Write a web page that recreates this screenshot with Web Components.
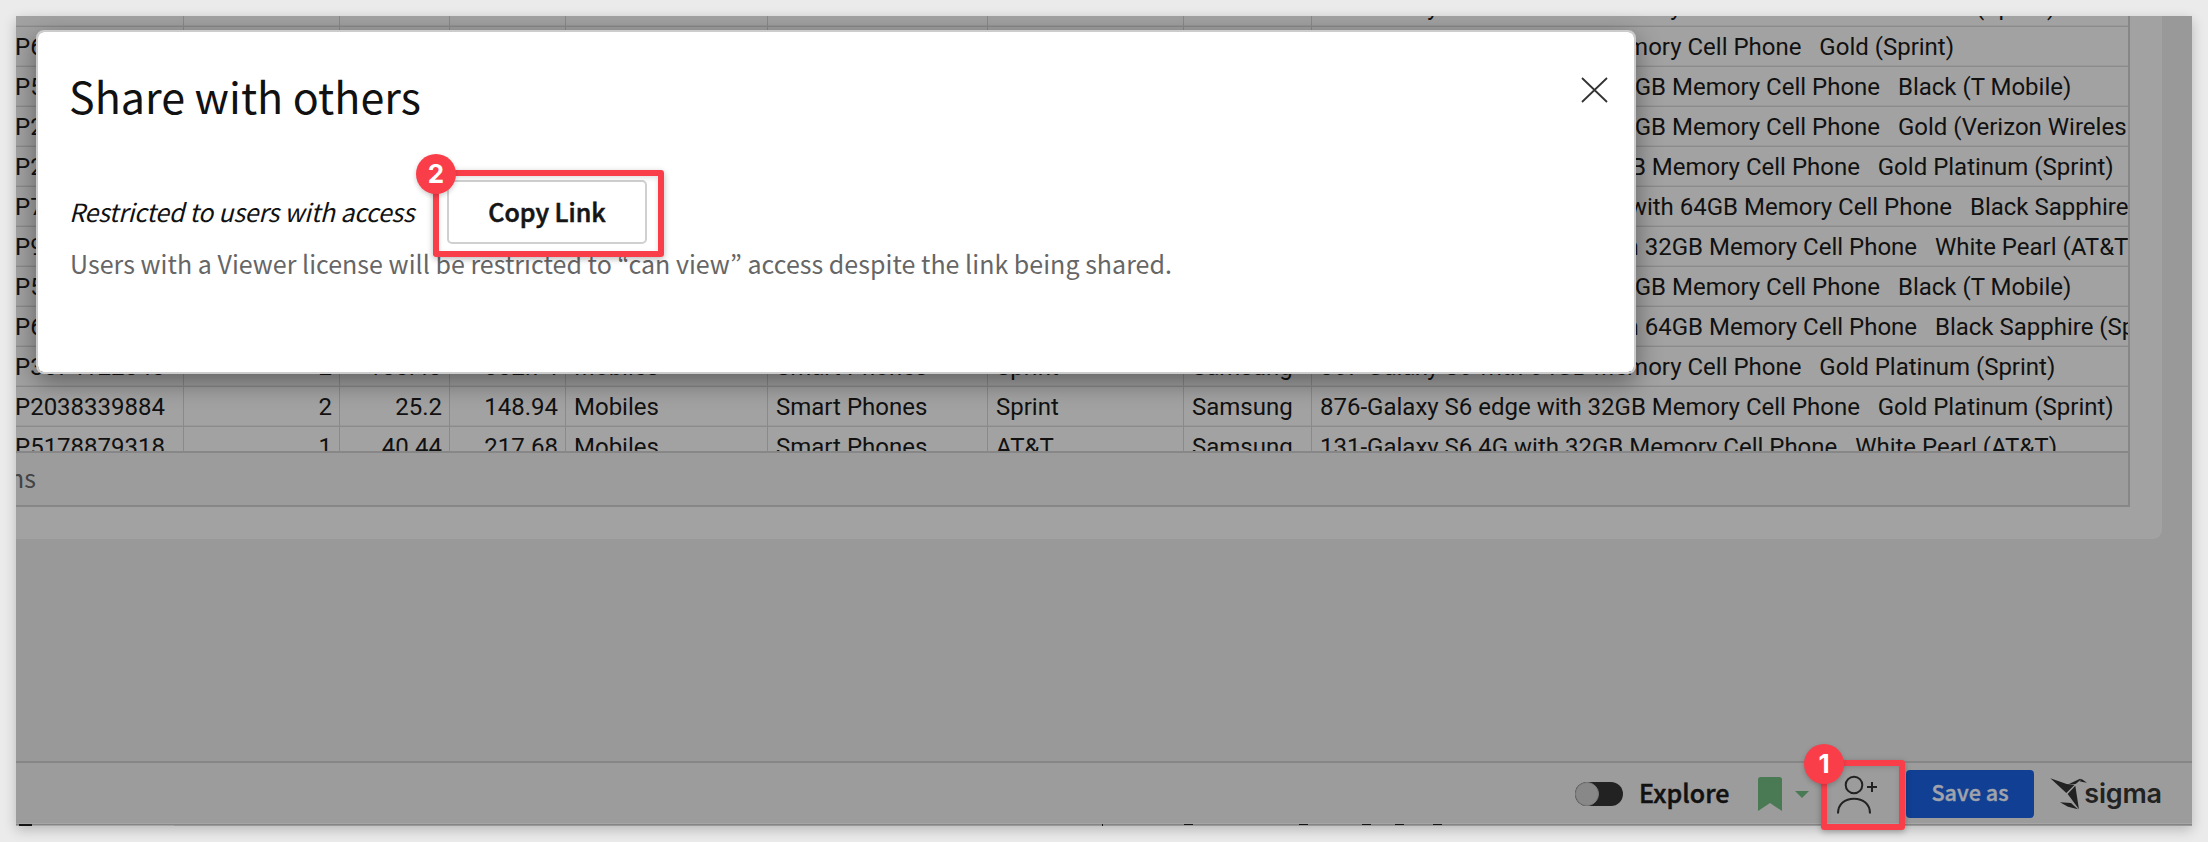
<!DOCTYPE html>
<html lang="en">
<head>
<meta charset="utf-8">
<title>Share with others</title>
<style>
  html, body { margin: 0; height: 100%; background: #ebebeb; }
  body { overflow: hidden; font-family: "Noto Sans CJK KR", "Noto Sans CJK SC", sans-serif; }
</style>
</head>
<body>
<app-screen>
  <data-table></data-table>
  <bottom-bar slot="bar"></bottom-bar>
  <share-dialog slot="dialog"></share-dialog>
</app-screen>
<script>
const define = (name, html, setup) => customElements.define(name, class extends HTMLElement {
  constructor() {
    super();
    this.attachShadow({ mode: 'open' }).innerHTML = html;
    if (setup) setup.call(this, this.shadowRoot);
  }
});

/* numbered red frame around a control */
define('step-marker', `
<style>
  :host { position: absolute; box-sizing: border-box; border: 6px solid #f93e4a; border-radius: 3px;
    box-shadow: 0 2px 6px rgba(0,0,0,.28), inset 0 2px 5px rgba(0,0,0,.12); pointer-events: none; }
  b { position: absolute; left: -23px; top: -22px; width: 40px; height: 40px; border-radius: 50%;
    background: #f93e4a; color: #fff; font: 700 26px/40px Inter, sans-serif; text-align: center;
    box-shadow: 0 2px 5px rgba(0,0,0,.2); }
</style><b><slot></slot></b>`);

define('data-table', `
<style>
  :host { display: block; width: 2112px; overflow: hidden; border-right: 2px solid #878787; color: #111;
    font-family: Roboto, sans-serif; font-size: 24px; }
  .rows { height: 435px; overflow: hidden; }
  .row { display: grid; grid-template-columns: 168px 156px 110px 116px 202px 220px 196px 128px 1fr;
    height: 38px; line-height: 40px; border-bottom: 1px solid #8b8b8b; box-shadow: inset 0 -1px #999; padding-bottom: 1px; white-space: pre; }
  .row:first-child { margin-top: -29px; }
  .row span { box-sizing: border-box; overflow: hidden; border-right: 1px solid #8a8a8a; padding: 0 7px 0 8px; height: 39px; min-width: 0; }
  .row span:first-child { padding: 0; text-indent: -1px; }
  .row .n { text-align: right; }
  .row .d { display: flex; border: 0; padding-right: 0; }
  .d i { font-style: normal; flex: none; display: flex; justify-content: flex-end; }
  .foot { box-sizing: border-box; height: 56px; border: solid #878787; border-width: 2px 0; background: #9c9c9c; display: flex; align-items: center; }
  .foot div { width: 20px; overflow: hidden; display: flex; justify-content: flex-end; color: #444;
    font: 25px/36px "Noto Sans CJK KR", sans-serif; margin-top: -5px; }
</style>
<div class="rows"></div>
<div class="foot"><div>ns</div></div>`, function (root) {
  const M = 'Memory Cell Phone   ';
  const rows = [
    ['', '', '', '', '', '357-Galaxy S6 with 64GB ', 0, 'Gold Platinum (Sprint)'],
    ['P6', '', '', '', '', '214-Galaxy S6 with 32GB ', 0, 'Gold (Sprint)'],
    ['P5', '', '', '', '', '32GB ', 352, 'Black (T Mobile)'],
    ['P2', '', '', '', '', '32GB ', 352, 'Gold (Verizon Wireles'],
    ['P2', '', '', '', '', '876-Galaxy S6 edge with 32GB ', 0, 'Gold Platinum (Sprint)'],
    ['P7', '', '', '', '', 'with 64GB ', 424, 'Black Sapphire'],
    ['P9', '', '', '', '', 'with 32GB ', 389, 'White Pearl (AT&T)'],
    ['P5', '', '', '', '', '32GB ', 352, 'Black (T Mobile)'],
    ['P6', '', '', '', '', 'with 64GB ', 389, 'Black Sapphire (Sprint)'],
    ['P3074122040', '2', '100.43', '302.74', 'Sprint', '367-Galaxy S6 with 64GB ', 0, 'Gold Platinum (Sprint)'],
    ['P2038339884', '2', '25.2', '148.94', 'Sprint', '876-Galaxy S6 edge with 32GB ', 0, 'Gold Platinum (Sprint)'],
    ['P5178879318', '1', '40.44', '217.68', 'AT&T', '131-Galaxy S6 4G with 32GB ', 0, 'White Pearl (AT&T)']
  ];
  const esc = s => s.replace(/&/g, '&amp;');
  root.querySelector('.rows').innerHTML = rows.map(r => {
    const full = r[1] !== '';
    return `<div class="row"><span>${r[0]}</span><span class="n">${r[1]}</span><span class="n">${r[2]}</span><span class="n">${r[3]}</span><span>${full ? 'Mobiles' : ''}</span><span>${full ? 'Smart Phones' : ''}</span><span>${esc(r[4])}</span><span>${full ? 'Samsung' : ''}</span><span class="d"><i${r[6] ? ` style="width:${r[6]}px"` : ''}>${r[5]}</i>${M}${esc(r[7])}</span></div>`;
  }).join('');
});

define('app-screen', `
<style>
  :host { position: relative; display: flex; flex-direction: column; box-sizing: border-box; width: 2176px; height: 810px;
    margin: 16px; background: #999; box-shadow: 0 4px 12px rgba(0,0,0,.22); }
  .clip { display: flex; flex-direction: column; flex: 1; overflow: hidden; }
  .card { width: 2146px; height: 523px; background: #a2a2a2; border-radius: 0 0 9px 0; }
  .gap { flex: 1; }
</style>
<div class="clip"><div class="card"><slot></slot></div><div class="gap"></div></div>
<slot name="bar"></slot>
<slot name="dialog"></slot>`);

define('save-button', `
<style>
  :host { display: block; box-sizing: border-box; width: 128px; height: 48px; border-radius: 4px; background: #103f93; color: #a0a3ab;
    font-size: 21.6px; font-weight: 500; line-height: 44px; text-align: center; -webkit-text-stroke: .4px #a0a3ab; }
</style><slot></slot>`);

define('sigma-logo', `
<style>
  :host { display: flex; align-items: flex-start; color: #222; }
  svg { display: block; width: 37.3px; height: 32px; margin-top: 8px; }
  b { font: 600 27px/32px Inter, sans-serif; margin: 8px 0 0 -3px; letter-spacing: -.2px; }
</style>
<svg viewBox="0 0 112 96" fill="#222"><path d="M1 1 50 18 74 20 49 45Z"/><path d="M57 18 90 2 94 4 77 18Z"/><path d="M89 10 95 3 111 14 98 12Z"/><path d="M76 23 87 94 53 48Z"/><path d="M30 73 63 75 84 94 54 86Z"/></svg><b>sigma</b>`);

define('bottom-bar', `
<style>
  :host { display: block; position: relative; box-sizing: border-box; height: 65px; background: #9c9c9c; border-top: 2px solid #868686; }
  .bar { display: flex; height: 60px; box-sizing: border-box; align-items: center; padding-left: 1559px; }
  .tog { width: 48px; height: 24px; border-radius: 12px; background: #222; margin-top: 2px; }
  .tog div { box-sizing: border-box; width: 24px; height: 24px; border-radius: 50%; background: #888; border: 1px solid #7b7b7b; }
  .ex { margin: -2px 0 0 16px; width: 93px; font-size: 25px; line-height: 36px; font-weight: 500; color: #111; -webkit-text-stroke: .5px #111; letter-spacing: .1px; }
  .bm { margin: 2px 0 0 26px; }
  .ca { margin: 2px 0 0 13px; }
  .us { margin: 1px 0 0 28px; }
  svg { display: block; flex: none; }
  save-button { margin: 2px 0 0 28px; }
  sigma-logo { margin-left: 16px; align-self: stretch; margin-top: 7px; }
  step-marker { left: 1805px; top: -3px; width: 84px; height: 70px; }
</style>
<div class="bar">
  <div class="tog"><div></div></div>
  <div class="ex">Explore</div>
  <svg class="bm" width="24" height="34" viewBox="0 0 24 34"><path d="M2.5 0h19Q24 0 24 2.5V34L12 26 0 34V2.500Q0 0 2.500 0Z" fill="#497a54"/></svg>
  <svg class="ca" width="14" height="7" viewBox="0 0 14 7"><path d="M0 0H14L7 7Z" fill="#497a54"/></svg>
  <svg class="us" width="41" height="40" viewBox="0 0 41 40" fill="none" stroke="#222" stroke-width="2"><circle cx="17" cy="11" r="8.300"/><path d="M1 39.500C1 30 8 24.800 17 24.800S33 30 33 39.500"/><path d="M30 13h10M35 8v10"/></svg>
  <save-button>Save as</save-button>
  <sigma-logo></sigma-logo>
</div>
<svg width="2176" height="3" viewBox="0 0 2176 3"><path fill="#a6a6a6" d="M0 0h2176v3H0z"/><path fill="#858585" d="M0 1h2176v1H0z"/><path fill="#999" d="M158 2h2018v1H158z"/><path fill="#151515" d="M3 1h13v2H3zM1086 1h1v2h-1zM1168 1h9v1h-9zM1283 1h9v1h-9zM1346 1h9v1h-9zM1379 1h9v1h-9zM1417 1h9v1h-9z"/></svg>
<step-marker>1</step-marker>`);

define('share-dialog', `
<style>
  :host { position: absolute; left: 20px; top: 14px; box-sizing: border-box; width: 1600px; height: 344px; background: #fff;
    border: 2px solid #ccc; border-radius: 8px; background-clip: padding-box; padding: 29px 26px 0 32px; color: #111;
    box-shadow: 0 8px 26px rgba(0,0,0,.42); }
  header { display: flex; justify-content: space-between; align-items: flex-start; }
  h1 { margin: 0 0 0 -1px; font-size: 43px; line-height: 68px; font-weight: 400; white-space: nowrap; }
  header svg { display: block; margin-top: 16px; }
  .row { position: relative; display: flex; align-items: center; height: 64px; margin-top: 51px; font-size: 25px; white-space: nowrap; }
  em { width: 346px; letter-spacing: -.26px; line-height: 36px; margin: -2px 0 0 -1px; }
  button { box-sizing: border-box; width: 200px; height: 64px; margin: 0 0 0 32px; padding: 0 0 2px; border: 2px solid #d0d0d0; border-radius: 5px;
    background: #fff; font: 500 25px/36px "Noto Sans CJK KR", sans-serif; color: #151515; -webkit-text-stroke: .6px #151515; }
  p { margin: 1px 0 0; font-size: 25px; line-height: 36px; color: #666; white-space: nowrap; letter-spacing: .025px; }
  step-marker { left: 363px; top: -10px; width: 231px; height: 87px; }
</style>
<header><h1>Share with others</h1>
<svg width="27" height="26" viewBox="0 0 27 26"><path d="M1 1 26 25M26 1 1 25" stroke="#333" stroke-width="1.800"/></svg></header>
<div class="row"><em>Restricted to users with access</em><button>Copy Link</button><step-marker>2</step-marker></div>
<p>Users with a Viewer license will be restricted to “can view” access despite the link being shared.</p>`);
</script>
</body>
</html>
